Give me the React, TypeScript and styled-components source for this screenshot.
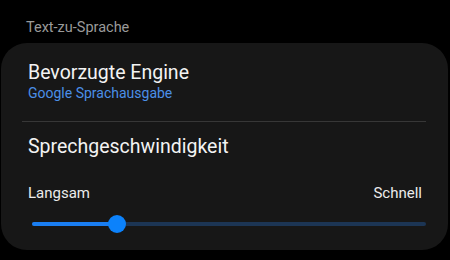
import React from 'react';
import styled, {createGlobalStyle} from 'styled-components';

const GlobalStyle = createGlobalStyle`
  html, body {
    margin: 0;
    padding: 0;
    background: #000;
  }
  body {
    font-family: Roboto, 'Noto Sans', 'Liberation Sans', sans-serif;
    -webkit-font-smoothing: antialiased;
  }
`;

const Screen = styled.div`
  width: 450px;
  height: 260px;
  background: #000;
  padding-top: 20px;
  box-sizing: border-box;
  display: flex;
  flex-direction: column;
  overflow: hidden;
`;

const SectionHeader = styled.div`
  font-size: 14.5px;
  line-height: 16px;
  color: #9a9a9a;
  padding-left: 26px;
`;

const Card = styled.div`
  margin: 7px 2px 0 1px;
  background: #171717;
  border-radius: 26px;
  display: flex;
  flex-direction: column;
`;

const Item = styled.div<{top: number; bottom: number}>`
  display: flex;
  flex-direction: column;
  padding: ${p => p.top}px 26px ${p => p.bottom}px 27px;
`;

const Title = styled.div`
  font-size: 19.5px;
  line-height: 24px;
  color: #f3f3f3;
`;

const Subtitle = styled.div`
  font-size: 14px;
  line-height: 17px;
  color: #4b8fe8;
`;

const Divider = styled.div`
  height: 1px;
  margin: 0 22px 0 21px;
  background: #373737;
`;

const Labels = styled.div`
  margin-top: 25px;
  display: flex;
  justify-content: space-between;
  font-size: 15px;
  line-height: 18px;
  color: #ececec;
`;

const SliderWrap = styled.div`
  position: relative;
  height: 18px;
  margin: 13px -4px 0 4px;
  display: flex;
  align-items: center;
`;

const Track = styled.div`
  position: relative;
  flex: 1;
  height: 4px;
  border-radius: 2px;
  background: #1c3554;
`;

const Fill = styled.div`
  position: absolute;
  left: 0;
  top: 0;
  bottom: 0;
  border-radius: 2px;
  background: #1a7ef2;
`;

const Thumb = styled.div`
  position: absolute;
  top: 50%;
  width: 18px;
  height: 18px;
  border-radius: 50%;
  background: #0c82fb;
  transform: translate(-50%, -50%);
`;

const Slider: React.FC<{value: number}> = ({value}) => (
  <SliderWrap>
    <Track>
      <Fill style={{width: `${value * 100}%`}} />
      <Thumb style={{left: `${value * 100}%`}} />
    </Track>
  </SliderWrap>
);

const App: React.FC = () => (
  <>
    <GlobalStyle />
    <Screen>
      <SectionHeader>Text-zu-Sprache</SectionHeader>
      <Card>
        <Item top={18} bottom={19}>
          <Title>Bevorzugte Engine</Title>
          <Subtitle>Google Sprachausgabe</Subtitle>
        </Item>
        <Divider />
        <Item top={13} bottom={17}>
          <Title>Sprechgeschwindigkeit</Title>
          <Labels>
            <span>Langsam</span>
            <span>Schnell</span>
          </Labels>
          <Slider value={0.215} />
        </Item>
      </Card>
    </Screen>
  </>
);

export default App;
